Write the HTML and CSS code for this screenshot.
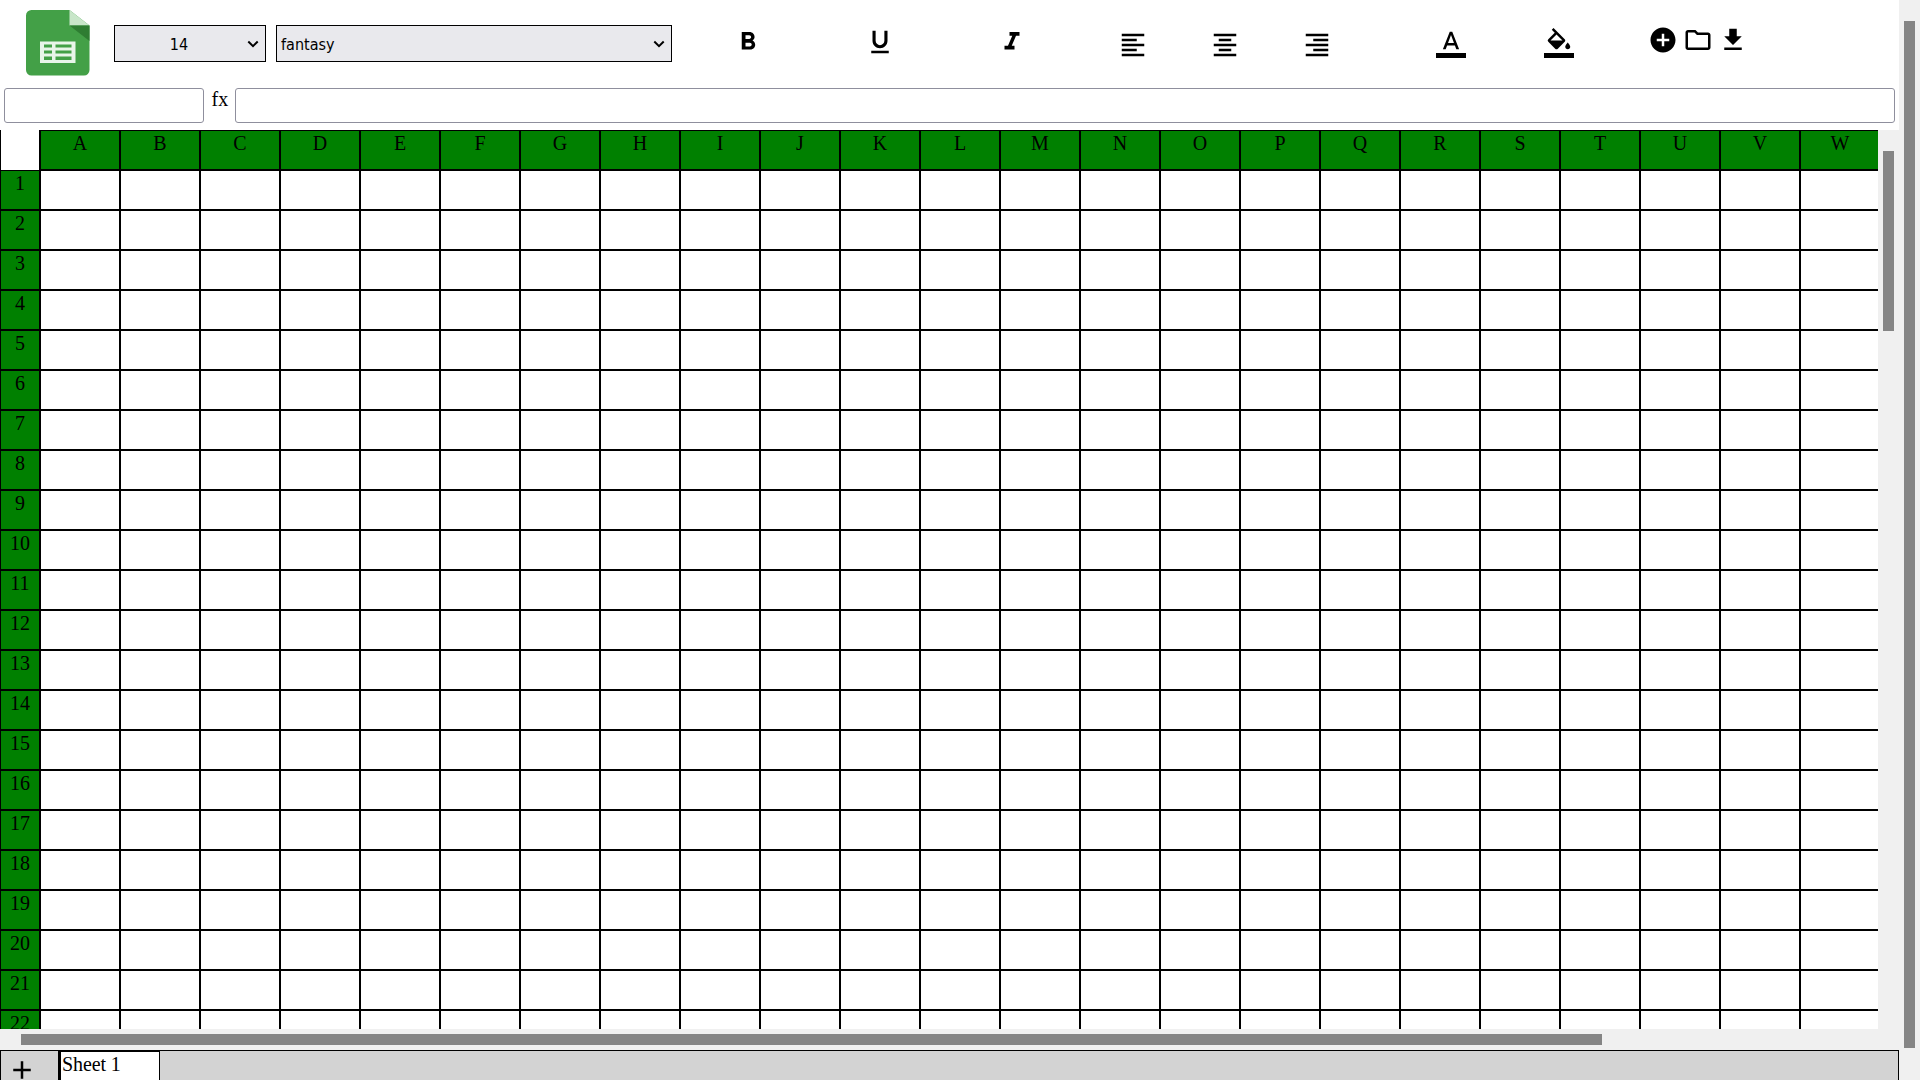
FILE: index.html
```html
<!DOCTYPE html>
<html lang="en">
<head>
<meta charset="utf-8">
<title>Sheets</title>
<link rel="stylesheet" href="styles.css">
</head>
<body>
<div class="page">
  <header class="toolbar">
    <svg class="logo" viewBox="0 0 64 66">
      <path fill="#43a047" d="M5 0H43.5L63.5 15.500V60a5.500 5.500 0 0 1-5.500 5.500H5.500A5.500 5.500 0 0 1 0 60V5.500A5.500 5.500 0 0 1 5.500 0Z"/>
      <path fill="#c8e6c9" d="M43.500 0 63.500 15.500H43.500Z"/>
      <path fill="#2e7d32" d="M43.500 15.500H63.500V31Z"/>
      <path fill="#e8f5e9" d="M14 31.500H49.500V53H14Z"/>
      <path fill="#43a047" d="M18 34.500h8v3h-8zM29.500 34.500h16v3h-16zM18 40.500h8v3h-8zM29.500 40.500h16v3h-16zM18 46.500h8v3.500h-8zM29.500 46.500h16v3.500h-16z"/>
    </svg>
    <div class="picker picker-size"><select class="select"><option>14</option></select><svg class="chevron" viewBox="0 0 12 8"><path d="M1.300 1.500 6 6.100 10.700 1.500"/></svg></div>
    <div class="picker picker-font"><select class="select"><option>fantasy</option></select><svg class="chevron" viewBox="0 0 12 8"><path d="M1.300 1.500 6 6.100 10.700 1.500"/></svg></div>
    <div class="styles">
      <svg class="icon" viewBox="0 0 24 24"><path d="M15.600 10.790c.97-.67 1.650-1.770 1.650-2.790 0-2.260-1.750-4-4-4H7v14h7.040c2.090 0 3.710-1.700 3.710-3.790 0-1.520-.86-2.820-2.150-3.420zM10 6.500h3c.83 0 1.500.67 1.500 1.500s-.67 1.500-1.500 1.500h-3v-3zm3.500 9H10v-3h3.500c.83 0 1.500.67 1.500 1.500s-.67 1.500-1.500 1.500z"/></svg>
      <svg class="icon" viewBox="0 0 24 24"><path d="M12 17c3.310 0 6-2.690 6-6V3h-2.500v8c0 1.930-1.570 3.500-3.500 3.500S8.500 12.930 8.500 11V3H6v8c0 3.310 2.690 6 6 6zm-7 2v2h14v-2H5z"/></svg>
      <svg class="icon" viewBox="0 0 24 24"><path d="M10 4v3h2.210l-3.420 8H6v3h8v-3h-2.210l3.420-8H18V4z"/></svg>
    </div>
    <div class="aligns">
      <svg class="icon" viewBox="0 0 24 24"><path d="M15 15H3v2h12v-2zm0-8H3v2h12V7zM3 13h18v-2H3v2zm0 8h18v-2H3v2zM3 3v2h18V3H3z"/></svg>
      <svg class="icon" viewBox="0 0 24 24"><path d="M7 15v2h10v-2H7zm-4 6h18v-2H3v2zm0-8h18v-2H3v2zm4-6v2h10V7H7zM3 3v2h18V3H3z"/></svg>
      <svg class="icon" viewBox="0 0 24 24"><path d="M3 21h18v-2H3v2zm6-4h12v-2H9v2zm-6-4h18v-2H3v2zm6-4h12V7H9v2zM3 3v2h18V3H3z"/></svg>
    </div>
    <div class="colors">
      <svg class="icon" viewBox="0 0 24 24"><path d="M0 20h24v4H0zM11 3 5.500 17h2.250l1.120-3h6.250l1.120 3h2.250L13 3h-2zm-1.380 9L12 5.670 14.380 12H9.620z"/></svg>
      <svg class="icon" viewBox="0 0 24 24"><path d="M16.560 8.940 7.620 0 6.210 1.410l2.380 2.380-5.150 5.150a1.490 1.490 0 0 0 0 2.120l5.500 5.500c.29.290.68.440 1.060.440s.77-.15 1.060-.44l5.500-5.500c.59-.58.59-1.530 0-2.120zM5.210 10 10 5.210 14.790 10H5.210zM19 11.500s-2 2.170-2 3.500c0 1.100.9 2 2 2s2-.9 2-2c0-1.330-2-3.500-2-3.500zM0 20h24v4H0z"/></svg>
    </div>
    <div class="files">
      <svg class="icon" viewBox="0 0 24 24"><path d="M12 2C6.480 2 2 6.480 2 12s4.480 10 10 10 10-4.480 10-10S17.520 2 12 2zm5 11h-4v4h-2v-4H7v-2h4V7h2v4h4v2z"/></svg>
      <svg class="icon" viewBox="0 0 24 24"><path d="M9.170 6l2 2H20v10H4V6h5.170M10 4H4c-1.100 0-1.990.9-1.990 2L2 18c0 1.100.9 2 2 2h16c1.100 0 2-.9 2-2V8c0-1.100-.9-2-2-2h-8l-2-2z"/></svg>
      <svg class="icon" viewBox="0 0 24 24"><path d="M19 9h-4V3H9v6H5l7 7 7-7zM5 18v2h14v-2H5z"/></svg>
    </div>
  </header>
  <div class="formula-bar">
    <input class="field field-address" type="text">
    <span class="fx">fx</span>
    <input class="field field-formula" type="text">
  </div>
  <main class="sheet">
    <div class="grid" id="grid"></div>
    <div class="track-y"><div class="thumb-y"></div></div>
    <div class="track-x"><div class="thumb-x"></div></div>
  </main>
  <footer class="tabs">
    <div class="add"><svg class="icon" viewBox="0 0 24 24"><path d="M19 13h-6v6h-2v-6H5v-2h6V5h2v6h6v2z"/></svg></div>
    <div class="tab">Sheet 1</div>
  </footer>
</div>
<div class="page-track"><div class="page-thumb"></div></div>
<script src="script.js"></script>
</body>
</html>
```
FILE: styles.css
```css
* { box-sizing: border-box; }
body {
  margin: 0;
  height: 1080px;
  display: flex;
  overflow: hidden;
  background: #fff;
  color: #000;
  font-family: "Liberation Serif", "Times New Roman", serif;
  font-size: 20px;
  line-height: 23px;
}
svg { display: block; flex: none; }
.page { width: 1899px; height: 1080px; display: flex; flex-direction: column; }

.toolbar { height: 88px; flex: none; display: flex; align-items: flex-start; }
.logo { width: 64px; height: 66px; margin: 10px 0 0 26px; }
.picker { display: grid; align-items: center; height: 37px; margin-top: 25px; }
.picker > * { grid-area: 1 / 1; }
.picker-size { width: 152px; margin-left: 24px; }
.picker-font { width: 396px; margin-left: 10px; }
.select {
  appearance: none;
  width: 100%;
  height: 37px;
  margin: 0;
  padding: 1px 4px 0 4px;
  border: 1px solid #000;
  border-radius: 0;
  background: #e9e9ed;
  color: #000;
  font: 16px "DejaVu Sans Condensed", "DejaVu Sans", sans-serif;
  font-stretch: condensed;
}
.picker-size .select { padding: 1px 22px 0 0; text-align: center; text-align-last: center; }
.chevron { width: 12px; height: 8px; justify-self: end; margin-right: 7px; }
.chevron path { fill: none; stroke: #000; stroke-width: 2; }

.icon { width: 30px; height: 30px; }
.styles { display: flex; gap: 102px; margin: 27px 0 0 61px; }
.aligns { display: flex; gap: 62px; margin: 30px 0 0 91px; }
.colors { display: flex; gap: 78px; margin: 28px 0 0 104px; }
.files { display: flex; gap: 5px; margin: 25px 0 0 74px; }

.formula-bar { height: 42px; flex: none; display: flex; align-items: flex-start; padding-left: 4px; }
.field { height: 35px; margin: 0; border: 1px solid #8f8f9d; border-radius: 3px; background: #fff; }
.field-address { width: 200px; }
.fx { width: 31px; padding-left: 7.500px; }
.field-formula { width: 1660px; }

.sheet {
  height: 920px;
  flex: none;
  display: grid;
  grid-template: 899px 21px / 1878px 21px;
  background: #f0f0f0;
}
.grid {
  display: grid;
  grid-template-columns: 40px repeat(23, 80px);
  grid-auto-rows: 40px;
  overflow: hidden;
  background: #fff;
}
.cell { padding-top: 1px; border: 1px solid #000; text-align: center; }
.head { background: green; }
.corner { border-top: 0; border-bottom: 0; }
.track-y { padding: 21px 5px 0; }
.thumb-y { height: 180px; background: #858585; }
.track-x { padding: 5px 0 0 21px; }
.thumb-x { width: 1581px; height: 11px; background: #858585; }

.tabs { height: 30px; flex: none; display: flex; overflow: hidden; border: 1px solid #000; border-bottom: 0; background: lightgray; }
.add { width: 58px; padding: 4px 0 0 6px; border-right: 1px solid #000; }
.tab { width: 101px; height: 40px; padding: 1px 0 0 1px; border: 1px solid #000; border-left-width: 2px; background: #fff; letter-spacing: -0.1px; }

.page-track { width: 21px; background: #f0f0f0; padding: 21px 5px 0; }
.page-thumb { height: 1027px; background: #858585; }
```
FILE: script.js
```javascript
const grid = document.getElementById("grid");
const COLUMNS = 23;
const ROWS = 22;

function addCell(className, text) {
  const cell = document.createElement("div");
  cell.className = className;
  cell.textContent = text;
  grid.appendChild(cell);
}

addCell("cell corner", "");
for (let c = 0; c < COLUMNS; c++) {
  addCell("cell head", String.fromCharCode(65 + c));
}
for (let r = 1; r <= ROWS; r++) {
  addCell("cell head", String(r));
  for (let c = 0; c < COLUMNS; c++) {
    addCell("cell", "");
  }
}
```
